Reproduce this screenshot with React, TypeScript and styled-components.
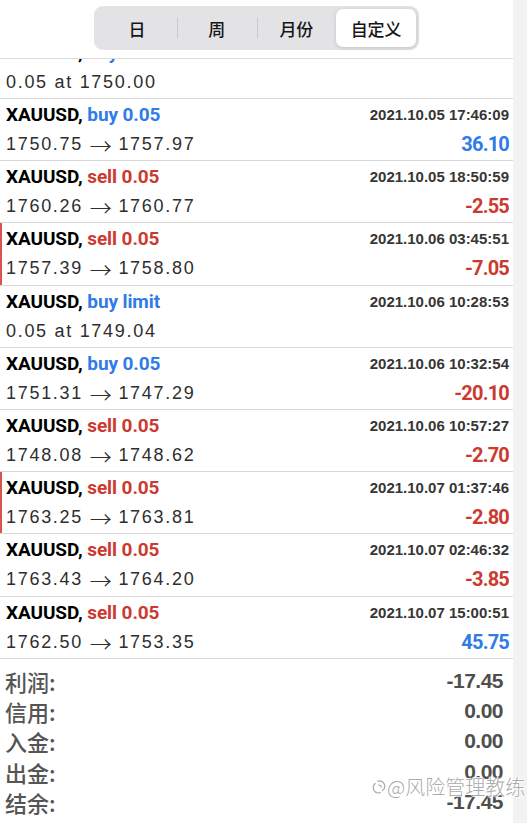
import React from "react";
import styled, { createGlobalStyle } from "styled-components";

const GlobalStyle = createGlobalStyle`
  html, body { margin: 0; padding: 0; background: #ffffff; }
  body { font-family: "Liberation Sans", Arial, sans-serif; }
`;

const Page = styled.div`
  position: relative;
  width: 527px;
  height: 823px;
  display: flex;
  overflow: hidden;
  background: #ffffff;
`;

const Main = styled.div`
  width: 513px;
  display: flex;
  flex-direction: column;
`;

const RightStrip = styled.div`
  flex: 1;
  background: #f2f2f3;
`;

const Header = styled.header`
  position: relative;
  z-index: 2;
  height: 59px;
  box-sizing: border-box;
  padding-top: 6px;
  display: flex;
  justify-content: center;
  align-items: flex-start;
  background: #ffffff;
  border-bottom: 1px solid #dcdcdc;
`;

const Segmented = styled.div`
  width: 325px;
  height: 44px;
  box-sizing: border-box;
  padding: 3px;
  display: flex;
  border-radius: 9px;
  background: #e3e3e6;
`;

const Segment = styled.div<{ $active?: boolean; $divider?: boolean }>`
  position: relative;
  flex: 1;
  display: flex;
  align-items: center;
  justify-content: center;
  border-radius: 7px;
  font-family: "Noto Sans CJK SC", sans-serif;
  font-size: 17px;
  font-weight: 500;
  color: #161616;
  background: ${(p) => (p.$active ? "#ffffff" : "transparent")};
  box-shadow: ${(p) => (p.$active ? "0 1px 4px rgba(0,0,0,0.14)" : "none")};
  &::before {
    content: "";
    display: ${(p) => (p.$divider ? "block" : "none")};
    position: absolute;
    left: 0;
    top: 9px;
    bottom: 9px;
    width: 1px;
    background: #c9c9cd;
  }
`;

const ListViewport = styled.div`
  overflow: hidden;
`;

const ListInner = styled.div`
  margin-top: -22.2px;
`;

const Row = styled.div<{ $marked?: boolean }>`
  height: 62.2px;
  box-sizing: border-box;
  padding: 4px 4px 0 6px;
  display: flex;
  flex-direction: column;
  gap: 5px;
  border-bottom: 1px solid #d8d8d8;
  box-shadow: ${(p) => (p.$marked ? "inset 2px 0 0 #d9534f" : "none")};
`;

const Line = styled.div`
  height: 24px;
  display: flex;
  align-items: center;
  justify-content: space-between;
  line-height: 24px;
`;

const Title = styled.div`
  font-family: Roboto, "Liberation Sans", sans-serif;
  font-weight: 700;
  font-size: 19px;
  letter-spacing: -0.1px;
  color: #000000;
  white-space: nowrap;
`;

const Side = styled.span<{ $side: "buy" | "sell" }>`
  color: ${(p) => (p.$side === "buy" ? "#2f7be8" : "#cc3a2f")};
`;

const DateText = styled.div`
  font-family: "Liberation Sans", sans-serif;
  font-weight: 700;
  font-size: 15px;
  color: #363636;
`;

const Price = styled.div`
  font-family: "Liberation Sans", sans-serif;
  font-size: 18px;
  letter-spacing: 1.7px;
  color: #2e2e2e;
  white-space: nowrap;
`;

const Arrow = styled.span`
  font-family: "Noto Sans CJK SC", sans-serif;
  font-size: 22px;
  font-weight: 300;
  letter-spacing: 0;
  line-height: 24px;
  vertical-align: top;
`;

const Profit = styled.div<{ $positive: boolean }>`
  font-family: Roboto, "Liberation Sans", sans-serif;
  font-weight: 700;
  font-size: 20px;
  letter-spacing: -0.8px;
  color: ${(p) => (p.$positive ? "#2f7be8" : "#cc3a2f")};
`;

const Summary = styled.div`
  padding: 7px 10px 0 5px;
  display: flex;
  flex-direction: column;
`;

const SummaryLine = styled.div`
  height: 30.25px;
  display: flex;
  align-items: center;
  justify-content: space-between;
`;

const SummaryLabel = styled.div`
  font-family: "Noto Sans CJK SC", sans-serif;
  font-size: 22px;
  font-weight: 500;
  line-height: 30px;
  color: #555555;
`;

const SummaryValue = styled.div`
  font-family: "Liberation Sans", sans-serif;
  font-weight: 700;
  font-size: 21px;
  letter-spacing: -0.5px;
  line-height: 30px;
  color: #4f4f4f;
`;

const Watermark = styled.div`
  position: absolute;
  left: 372px;
  top: 772px;
  display: flex;
  align-items: center;
  gap: 1px;
  white-space: nowrap;
  font-family: "Noto Sans CJK SC", sans-serif;
  font-size: 20px;
  font-weight: 300;
  color: rgba(160, 160, 160, 0.9);
  text-shadow: 0 0 1px #ffffff, 0 0 2px #ffffff, 1px 1px 0 rgba(255,255,255,0.9), -1px -1px 0 rgba(255,255,255,0.9);
`;

type Trade = {
  type: string;
  side: "buy" | "sell";
  date?: string;
  from?: string;
  to?: string;
  pending?: string;
  profit?: string;
  marked?: boolean;
};

const trades: Trade[] = [
  { type: "buy limit", side: "buy", pending: "0.05 at 1750.00" },
  { type: "buy 0.05", side: "buy", date: "2021.10.05 17:46:09", from: "1750.75", to: "1757.97", profit: "36.10" },
  { type: "sell 0.05", side: "sell", date: "2021.10.05 18:50:59", from: "1760.26", to: "1760.77", profit: "-2.55" },
  { type: "sell 0.05", side: "sell", date: "2021.10.06 03:45:51", from: "1757.39", to: "1758.80", profit: "-7.05", marked: true },
  { type: "buy limit", side: "buy", date: "2021.10.06 10:28:53", pending: "0.05 at 1749.04" },
  { type: "buy 0.05", side: "buy", date: "2021.10.06 10:32:54", from: "1751.31", to: "1747.29", profit: "-20.10" },
  { type: "sell 0.05", side: "sell", date: "2021.10.06 10:57:27", from: "1748.08", to: "1748.62", profit: "-2.70" },
  { type: "sell 0.05", side: "sell", date: "2021.10.07 01:37:46", from: "1763.25", to: "1763.81", profit: "-2.80", marked: true },
  { type: "sell 0.05", side: "sell", date: "2021.10.07 02:46:32", from: "1763.43", to: "1764.20", profit: "-3.85" },
  { type: "sell 0.05", side: "sell", date: "2021.10.07 15:00:51", from: "1762.50", to: "1753.35", profit: "45.75" },
];

const summary = [
  ["利润:", "-17.45"],
  ["信用:", "0.00"],
  ["入金:", "0.00"],
  ["出金:", "0.00"],
  ["结余:", "-17.45"],
];

const segments = ["日", "周", "月份", "自定义"];
const activeIndex = 3;

const WeiboIcon = () => (
  <svg width="14" height="16" viewBox="0 0 14 16" fill="none">
    <path
      d="M3 4.5 C1.2 6.5 0.8 9.5 2.2 11.8 C3.4 13.6 6 14.4 8.2 13.5"
      stroke="#a8a8a8"
      strokeWidth="1.2"
      strokeLinecap="round"
    />
    <path
      d="M5.5 2.2 C8.5 1.3 11.8 2.8 12.6 5.8 C13.2 8 12.2 10.2 10.5 11.3"
      stroke="#a8a8a8"
      strokeWidth="1.2"
      strokeLinecap="round"
    />
    <path d="M6.5 6 C8 5.7 9.4 6.8 9.3 8.3" stroke="#a8a8a8" strokeWidth="1.1" strokeLinecap="round" />
  </svg>
);

export default function App() {
  return (
    <>
      <GlobalStyle />
      <Page>
        <Main>
          <Header>
            <Segmented>
              {segments.map((s, i) => (
                <Segment
                  key={s}
                  $active={i === activeIndex}
                  $divider={i > 0 && i !== activeIndex && i - 1 !== activeIndex}
                >
                  {s}
                </Segment>
              ))}
            </Segmented>
          </Header>
          <ListViewport>
            <ListInner>
              {trades.map((t, i) => (
                <Row key={i} $marked={t.marked}>
                  <Line>
                    <Title>
                      XAUUSD, <Side $side={t.side}>{t.type}</Side>
                    </Title>
                    {t.date && <DateText>{t.date}</DateText>}
                  </Line>
                  <Line>
                    <Price>
                      {t.pending ?? (
                        <>
                          {t.from} <Arrow>→</Arrow> {t.to}
                        </>
                      )}
                    </Price>
                    {t.profit && (
                      <Profit $positive={!t.profit.startsWith("-")}>{t.profit}</Profit>
                    )}
                  </Line>
                </Row>
              ))}
            </ListInner>
          </ListViewport>
          <Summary>
            {summary.map(([label, value]) => (
              <SummaryLine key={label}>
                <SummaryLabel>{label}</SummaryLabel>
                <SummaryValue>{value}</SummaryValue>
              </SummaryLine>
            ))}
          </Summary>
        </Main>
        <RightStrip />
        <Watermark>
          <WeiboIcon />
          <span>@风险管理教练</span>
        </Watermark>
      </Page>
    </>
  );
}
